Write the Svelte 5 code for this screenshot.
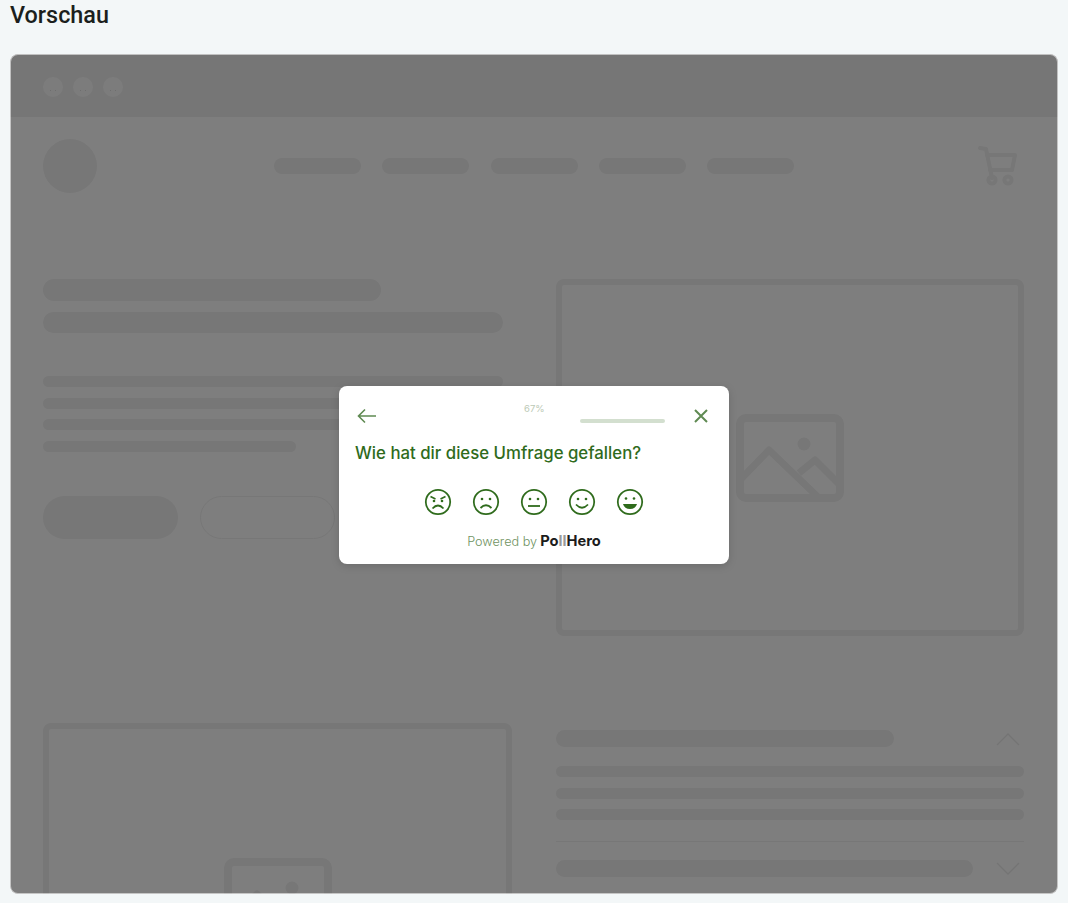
<script>
    const navItems = [1, 2, 3, 4, 5];
    const textLines = ['full', 'full', 'full', 'short'];
</script>

{#snippet imageBox()}
    <div class="image_box">
        <svg class="image_icon" width="108" height="88" viewBox="0 0 108 88" fill="none" stroke="#f0f0f0" stroke-width="7" stroke-linejoin="round">
            <rect x="4" y="4" width="100" height="80" rx="6" stroke-width="8" />
            <circle cx="68" cy="30" r="6.5" fill="#f0f0f0" stroke="none" />
            <path d="M4 66 L33 36 L83 84" />
            <path d="M63 59 L79 46 L103 70" />
        </svg>
    </div>
{/snippet}

<main class="preview">
    <h1>Vorschau</h1>

    <div class="frame">
        <div class="browser_bar">
            <span class="browser_dot"></span>
            <span class="browser_dot"></span>
            <span class="browser_dot"></span>
        </div>

        <div class="page">
            <header class="site_header">
                <div class="logo"></div>
                <nav class="site_nav">
                    {#each navItems as item (item)}
                        <span class="nav_pill"></span>
                    {/each}
                </nav>
                <svg class="cart" width="40" height="40" viewBox="0 0 40 40" fill="none" stroke="#f0f0f0" stroke-width="4" stroke-linecap="round" stroke-linejoin="round">
                    <path d="M2 2 L8 3 L14 32" />
                    <path d="M9 9 L37 9 L34 24 L12 24" />
                    <circle cx="14" cy="34" r="3.6" />
                    <circle cx="30" cy="34" r="3.6" />
                </svg>
            </header>

            <section class="row hero">
                <div class="hero_text">
                    <div class="bar title_short"></div>
                    <div class="bar title_long"></div>
                    <div class="lines">
                        {#each textLines as line, i (i)}
                            <div class="bar line {line}"></div>
                        {/each}
                    </div>
                    <div class="actions">
                        <span class="btn btn_solid"></span>
                        <span class="btn btn_outline"></span>
                    </div>
                </div>
                {@render imageBox()}
            </section>

            <section class="row lower">
                {@render imageBox()}
                <div class="accordion">
                    <div class="acc_head">
                        <div class="bar acc_title"></div>
                        <svg class="chevron" width="24" height="14" viewBox="0 0 24 14" fill="none" stroke="#ebebeb" stroke-width="1.4">
                            <path d="M1 13 L12 2 L23 13" />
                        </svg>
                    </div>
                    <div class="bar acc_line"></div>
                    <div class="bar acc_line"></div>
                    <div class="bar acc_line"></div>
                    <div class="acc_divider"></div>
                    <div class="acc_head second">
                        <div class="bar acc_title long"></div>
                        <svg class="chevron" width="24" height="14" viewBox="0 0 24 14" fill="none" stroke="#ebebeb" stroke-width="1.4">
                            <path d="M1 1 L12 12 L23 1" />
                        </svg>
                    </div>
                </div>
            </section>
        </div>

        <div class="overlay">
            <div class="poll">
                <div class="poll_top">
                    <svg class="poll_back" width="20" height="16" viewBox="0 0 20 16" fill="none" stroke="#5f8a52" stroke-width="1.6">
                        <path d="M19 8 L1.5 8 M8 1.5 L1.5 8 L8 14.5" />
                    </svg>
                    <span class="percent">67%</span>
                    <span class="progress"></span>
                    <svg class="poll_close" width="16" height="16" viewBox="0 0 16 16" fill="none" stroke="#5f8a52" stroke-width="2">
                        <path d="M2 2 L14 14 M14 2 L2 14" />
                    </svg>
                </div>

                <p class="question">Wie hat dir diese Umfrage gefallen?</p>

                <div class="faces">
                    <svg width="28" height="28" viewBox="0 0 28 28" fill="none" stroke="#2f6b1c" stroke-width="1.8">
                        <circle cx="14" cy="14" r="12.2" />
                        <path d="M6.5 8.5 L11.5 11 M21.5 8.5 L16.5 11" stroke-width="1.6" />
                        <circle cx="10" cy="13" r="1.3" fill="#2f6b1c" stroke="none" />
                        <circle cx="18" cy="13" r="1.3" fill="#2f6b1c" stroke="none" />
                        <path d="M8.5 20.5 Q14 14.5 19.5 20.5" />
                    </svg>
                    <svg width="28" height="28" viewBox="0 0 28 28" fill="none" stroke="#2f6b1c" stroke-width="1.8">
                        <circle cx="14" cy="14" r="12.2" />
                        <circle cx="10" cy="11" r="1.3" fill="#2f6b1c" stroke="none" />
                        <circle cx="18" cy="11" r="1.3" fill="#2f6b1c" stroke="none" />
                        <path d="M8.5 20 Q14 14.5 19.5 20" />
                    </svg>
                    <svg width="28" height="28" viewBox="0 0 28 28" fill="none" stroke="#2f6b1c" stroke-width="1.8">
                        <circle cx="14" cy="14" r="12.2" />
                        <circle cx="10" cy="11" r="1.3" fill="#2f6b1c" stroke="none" />
                        <circle cx="18" cy="11" r="1.3" fill="#2f6b1c" stroke="none" />
                        <path d="M8 18 L20 18" />
                    </svg>
                    <svg width="28" height="28" viewBox="0 0 28 28" fill="none" stroke="#2f6b1c" stroke-width="1.8">
                        <circle cx="14" cy="14" r="12.2" />
                        <circle cx="10" cy="11" r="1.3" fill="#2f6b1c" stroke="none" />
                        <circle cx="18" cy="11" r="1.3" fill="#2f6b1c" stroke="none" />
                        <path d="M8 16.5 Q14 23 20 16.5" />
                    </svg>
                    <svg width="28" height="28" viewBox="0 0 28 28" fill="none" stroke="#2f6b1c" stroke-width="1.8">
                        <circle cx="14" cy="14" r="12.2" />
                        <circle cx="10" cy="10.5" r="1.3" fill="#2f6b1c" stroke="none" />
                        <circle cx="18" cy="10.5" r="1.3" fill="#2f6b1c" stroke="none" />
                        <path d="M7 16 L21 16 Q19.5 21 14 21 Q8.5 21 7 16 Z" fill="#2f6b1c" stroke="none" />
                    </svg>
                </div>

                <div class="powered">
                    <span class="powered_label">Powered by</span>
                    <span class="brand">Po<span class="brand_ll">ll</span>Hero</span>
                </div>
            </div>
        </div>
    </div>
</main>

<style>
    :global(body) {
        background-color: #f3f7f8;
    }

    .preview {
        height: 903px;
        overflow: hidden;
        padding: 0 10px;
        box-sizing: border-box;
    }

    h1 {
        margin: 0;
        height: 54px;
        font-family: Roboto, "Liberation Sans", sans-serif;
        font-size: 23.4px;
        font-weight: 500;
        line-height: 30px;
        color: #1b1f1d;
    }

    .frame {
        position: relative;
        height: 840px;
        overflow: hidden;
        background-color: #fff;
        border-radius: 8px;
    }

    .browser_bar {
        display: flex;
        align-items: center;
        gap: 10px;
        height: 61px;
        padding: 2px 0 0 33px;
        background-color: #eeeeee;
    }

    .browser_dot {
        position: relative;
        width: 20px;
        height: 20px;
        border-radius: 50%;
        background-color: #fbfbfb;
    }

    /* small specks on the dots */
    .browser_dot::after {
        content: '';
        position: absolute;
        left: 7px;
        top: 13px;
        width: 1px;
        height: 1px;
        background-color: #dedede;
        box-shadow: 5px 0 0 #dedede;
    }

    .page {
        padding: 22px 33px 0;
    }

    .site_header {
        display: flex;
        align-items: center;
        height: 54px;
    }

    .logo {
        width: 54px;
        height: 54px;
        border-radius: 50%;
        background-color: #f0f0f0;
    }

    .site_nav {
        display: flex;
        gap: 21.25px;
        margin-left: 177px;
    }

    .nav_pill {
        width: 87px;
        height: 16px;
        border-radius: 8px;
        background-color: #f0f0f0;
    }

    .cart {
        margin-left: auto;
        margin-right: 7px;
    }

    .row {
        display: grid;
        grid-template-columns: 469px 468px;
        column-gap: 44px;
        margin-top: 87px;
    }

    .hero {
        margin-top: 86px;
    }

    .image_box {
        display: flex;
        align-items: center;
        justify-content: center;
        height: 357px;
        box-sizing: border-box;
        border: 6px solid #f0f0f0;
        border-radius: 8px;
    }

    .bar {
        border-radius: 11px;
        background-color: #f0f0f0;
    }

    .title_short {
        width: 338px;
        height: 22px;
    }

    .title_long {
        width: 460px;
        height: 21px;
        margin-top: 11px;
    }

    .lines {
        display: flex;
        flex-direction: column;
        gap: 10.5px;
        margin-top: 43px;
    }

    .line {
        width: 460px;
        height: 11px;
    }

    .line.short {
        width: 253px;
    }

    .actions {
        display: flex;
        gap: 22px;
        margin-top: 44px;
    }

    .btn {
        width: 135px;
        height: 43px;
        box-sizing: border-box;
        border-radius: 22px;
    }

    .btn_solid {
        background-color: #f0f0f0;
    }

    .btn_outline {
        border: 1px solid #f0f0f0;
    }

    .acc_head {
        display: flex;
        align-items: center;
        justify-content: space-between;
        padding: 7px 4px 0 0;
    }

    .acc_title {
        width: 338px;
        height: 17px;
    }

    .acc_title.long {
        width: 417px;
    }

    .acc_line {
        height: 11px;
        margin-top: 10.5px;
    }

    .acc_head + .acc_line {
        margin-top: 19px;
    }

    .acc_divider {
        height: 1px;
        margin-top: 21px;
        background-color: #f0f0f0;
    }

    .acc_head.second {
        padding-top: 18px;
    }

    .overlay {
        position: absolute;
        inset: 0;
        display: flex;
        align-items: center;
        justify-content: center;
        background-color: rgba(0, 0, 0, 0.505);
        box-shadow: inset 0 0 0 1px rgba(255, 255, 255, 0.55);
        border-radius: 8px;
    }

    .poll {
        width: 390px;
        height: 178px;
        padding: 0 16px;
        box-sizing: border-box;
        margin-top: 2px;
        background-color: #fff;
        border-radius: 8px;
        box-shadow: 0 2px 8px rgba(0, 0, 0, 0.15);
        font-family: Inter, "Open Sans", sans-serif;
    }

    .poll_top {
        position: relative;
        display: flex;
        align-items: center;
        height: 59px;
        padding-top: 1px;
        box-sizing: border-box;
    }

    .poll_back {
        margin-left: 2px;
    }

    .percent {
        position: absolute;
        left: 169px;
        top: 17px;
        font-size: 9.5px;
        color: #bcc9b6;
    }

    .progress {
        width: 85px;
        height: 4px;
        margin-left: 203px;
        margin-top: 9px;
        border-radius: 2px;
        background-color: #d3dfcf;
    }

    .poll_close {
        margin-left: 28px;
    }

    .question {
        margin: 0;
        height: 43px;
        font-size: 16.8px;
        font-weight: 500;
        line-height: 16px;
        color: #2f6b1c;
    }

    .faces {
        display: flex;
        justify-content: center;
        gap: 20px;
    }

    .powered {
        display: flex;
        align-items: baseline;
        justify-content: center;
        gap: 3px;
        margin-top: 16px;
    }

    .powered_label {
        font-size: 12.7px;
        font-weight: 300;
        color: #6f9362;
    }

    .brand {
        font-size: 14.7px;
        font-weight: 700;
        color: #1c1c1c;
    }

    .brand_ll {
        color: #9a9a9a;
    }
</style>
